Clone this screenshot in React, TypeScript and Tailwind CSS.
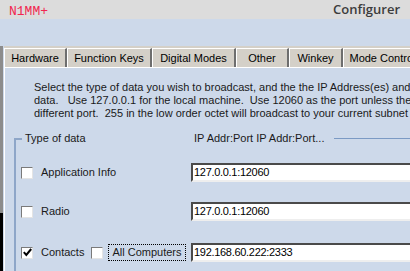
import type { ReactNode } from "react"

const tabs = [
  { label: "Hardware", w: "w-[63px]" },
  { label: "Function Keys", w: "w-[85px]" },
  { label: "Digital Modes", w: "w-[84px]" },
  { label: "Other", w: "w-[53px]" },
  { label: "Winkey", w: "w-[54px]" },
  { label: "Mode Control", w: "w-[80px]" },
]

function Check({ checked = false }: { checked?: boolean }) {
  return (
    <span className="flex h-[12px] w-[12px] shrink-0 items-center justify-center border border-t-[#7a7a7a] border-l-[#7a7a7a] border-b-[#e4e4e4] border-r-[#e4e4e4] bg-white">
      {checked && (
        <svg width="9" height="9" viewBox="0 0 9 9">
          <path d="M0.8 4.2 L3.3 7 L8.2 1" fill="none" stroke="#000" strokeWidth="2" />
        </svg>
      )}
    </span>
  )
}

function Field({ value }: { value: string }) {
  return (
    <div className="flex h-[19px] w-[240px] shrink-0 items-center border-2 border-t-[#4a4a4a] border-l-[#4a4a4a] border-b-[#eeeeee] border-r-[#eeeeee] bg-white pl-[1px] text-[11px] tracking-[-0.3px] text-black">
      {value}
    </div>
  )
}

function Row({ left, value }: { left: ReactNode; value: string }) {
  return (
    <div className="flex h-[19px] items-center">
      <div className="flex w-[175px] shrink-0 items-center pl-[5px]">{left}</div>
      <Field value={value} />
    </div>
  )
}

export default function App() {
  return (
    <div className="flex h-[271px] w-[410px] flex-col overflow-hidden bg-[#cdd9ea] font-['Liberation_Sans',Arial,sans-serif] text-[11px] leading-[13px] text-[#1a1a1a]">
      <div className="flex h-[19px] shrink-0 items-start justify-between bg-[#dcdcdc]">
        <span className="mt-[5px] ml-[9px] font-['Liberation_Mono',monospace] text-[13px] leading-[14px] text-[#f2264f]">N1MM+</span>
        <span className="mt-[1px] mr-[10px] font-['Open_Sans',sans-serif] text-[13px] font-semibold leading-[16px] text-[#3c3c3c]">Configurer</span>
      </div>
      <div className="h-[27px] shrink-0" />
      <div className="flex min-h-0 flex-1">
        <div className="flex w-[3px] shrink-0 flex-col">
          <div className="flex-1 bg-[#8c8c8c]" />
          <div className="h-[58px] bg-black" />
        </div>
        <div className="ml-[1px] flex min-w-0 flex-1 flex-col">
          <div className="flex h-[21px] shrink-0 items-end bg-[#d4d0c8] pt-[2px]">
            {tabs.map((t) => (
              <div
                key={t.label}
                className={`${t.w} flex h-[19px] shrink-0 items-center justify-center whitespace-nowrap border-t border-l border-r-2 border-t-white border-l-white border-r-[#6e6e6e] text-[11px] text-black`}
              >
                {t.label}
              </div>
            ))}
          </div>
          <div className="flex flex-1 flex-col border-t border-l border-white pt-[13px]">
            <p className="whitespace-nowrap pl-[29px]">
              Select the type of data you wish to broadcast, and the the IP Address(es) and
              <br />
              data.&nbsp;&nbsp; Use 127.0.0.1 for the local machine.&nbsp; Use 12060 as the port unless the
              <br />
              different port.&nbsp; 255 in the low order octet will broadcast to your current subnet
            </p>
            <div className="mt-[12px] ml-[9px] flex flex-1 flex-col">
              <div className="flex h-[13px] items-center whitespace-nowrap">
                <span className="h-[2px] w-[8px] shrink-0 bg-[#8ea6c8]" />
                <span className="ml-[3px] w-[169px] shrink-0">Type of data</span>
                <span>IP Addr:Port IP Addr:Port...</span>
                <span className="ml-[10px] h-[1px] flex-1 bg-[#7b9ac4]" />
              </div>
              <div className="-mt-[7px] flex flex-1 flex-col gap-[20px] border-l-2 border-[#8ea6c8] pt-[25px]">
                <Row
                  left={
                    <>
                      <Check />
                      <span className="ml-[8px]">Application Info</span>
                    </>
                  }
                  value="127.0.0.1:12060"
                />
                <Row
                  left={
                    <>
                      <Check />
                      <span className="ml-[8px]">Radio</span>
                    </>
                  }
                  value="127.0.0.1:12060"
                />
                <div className="mt-[2px]">
                  <Row
                    left={
                      <>
                        <Check checked />
                        <span className="ml-[8px]">Contacts</span>
                        <span className="ml-[7px]">
                          <Check />
                        </span>
                        <span className="ml-[5px] border border-dotted border-black px-[3px] leading-[15px]">All Computers</span>
                      </>
                    }
                    value="192.168.60.222:2333"
                  />
                </div>
              </div>
            </div>
          </div>
        </div>
      </div>
    </div>
  )
}
